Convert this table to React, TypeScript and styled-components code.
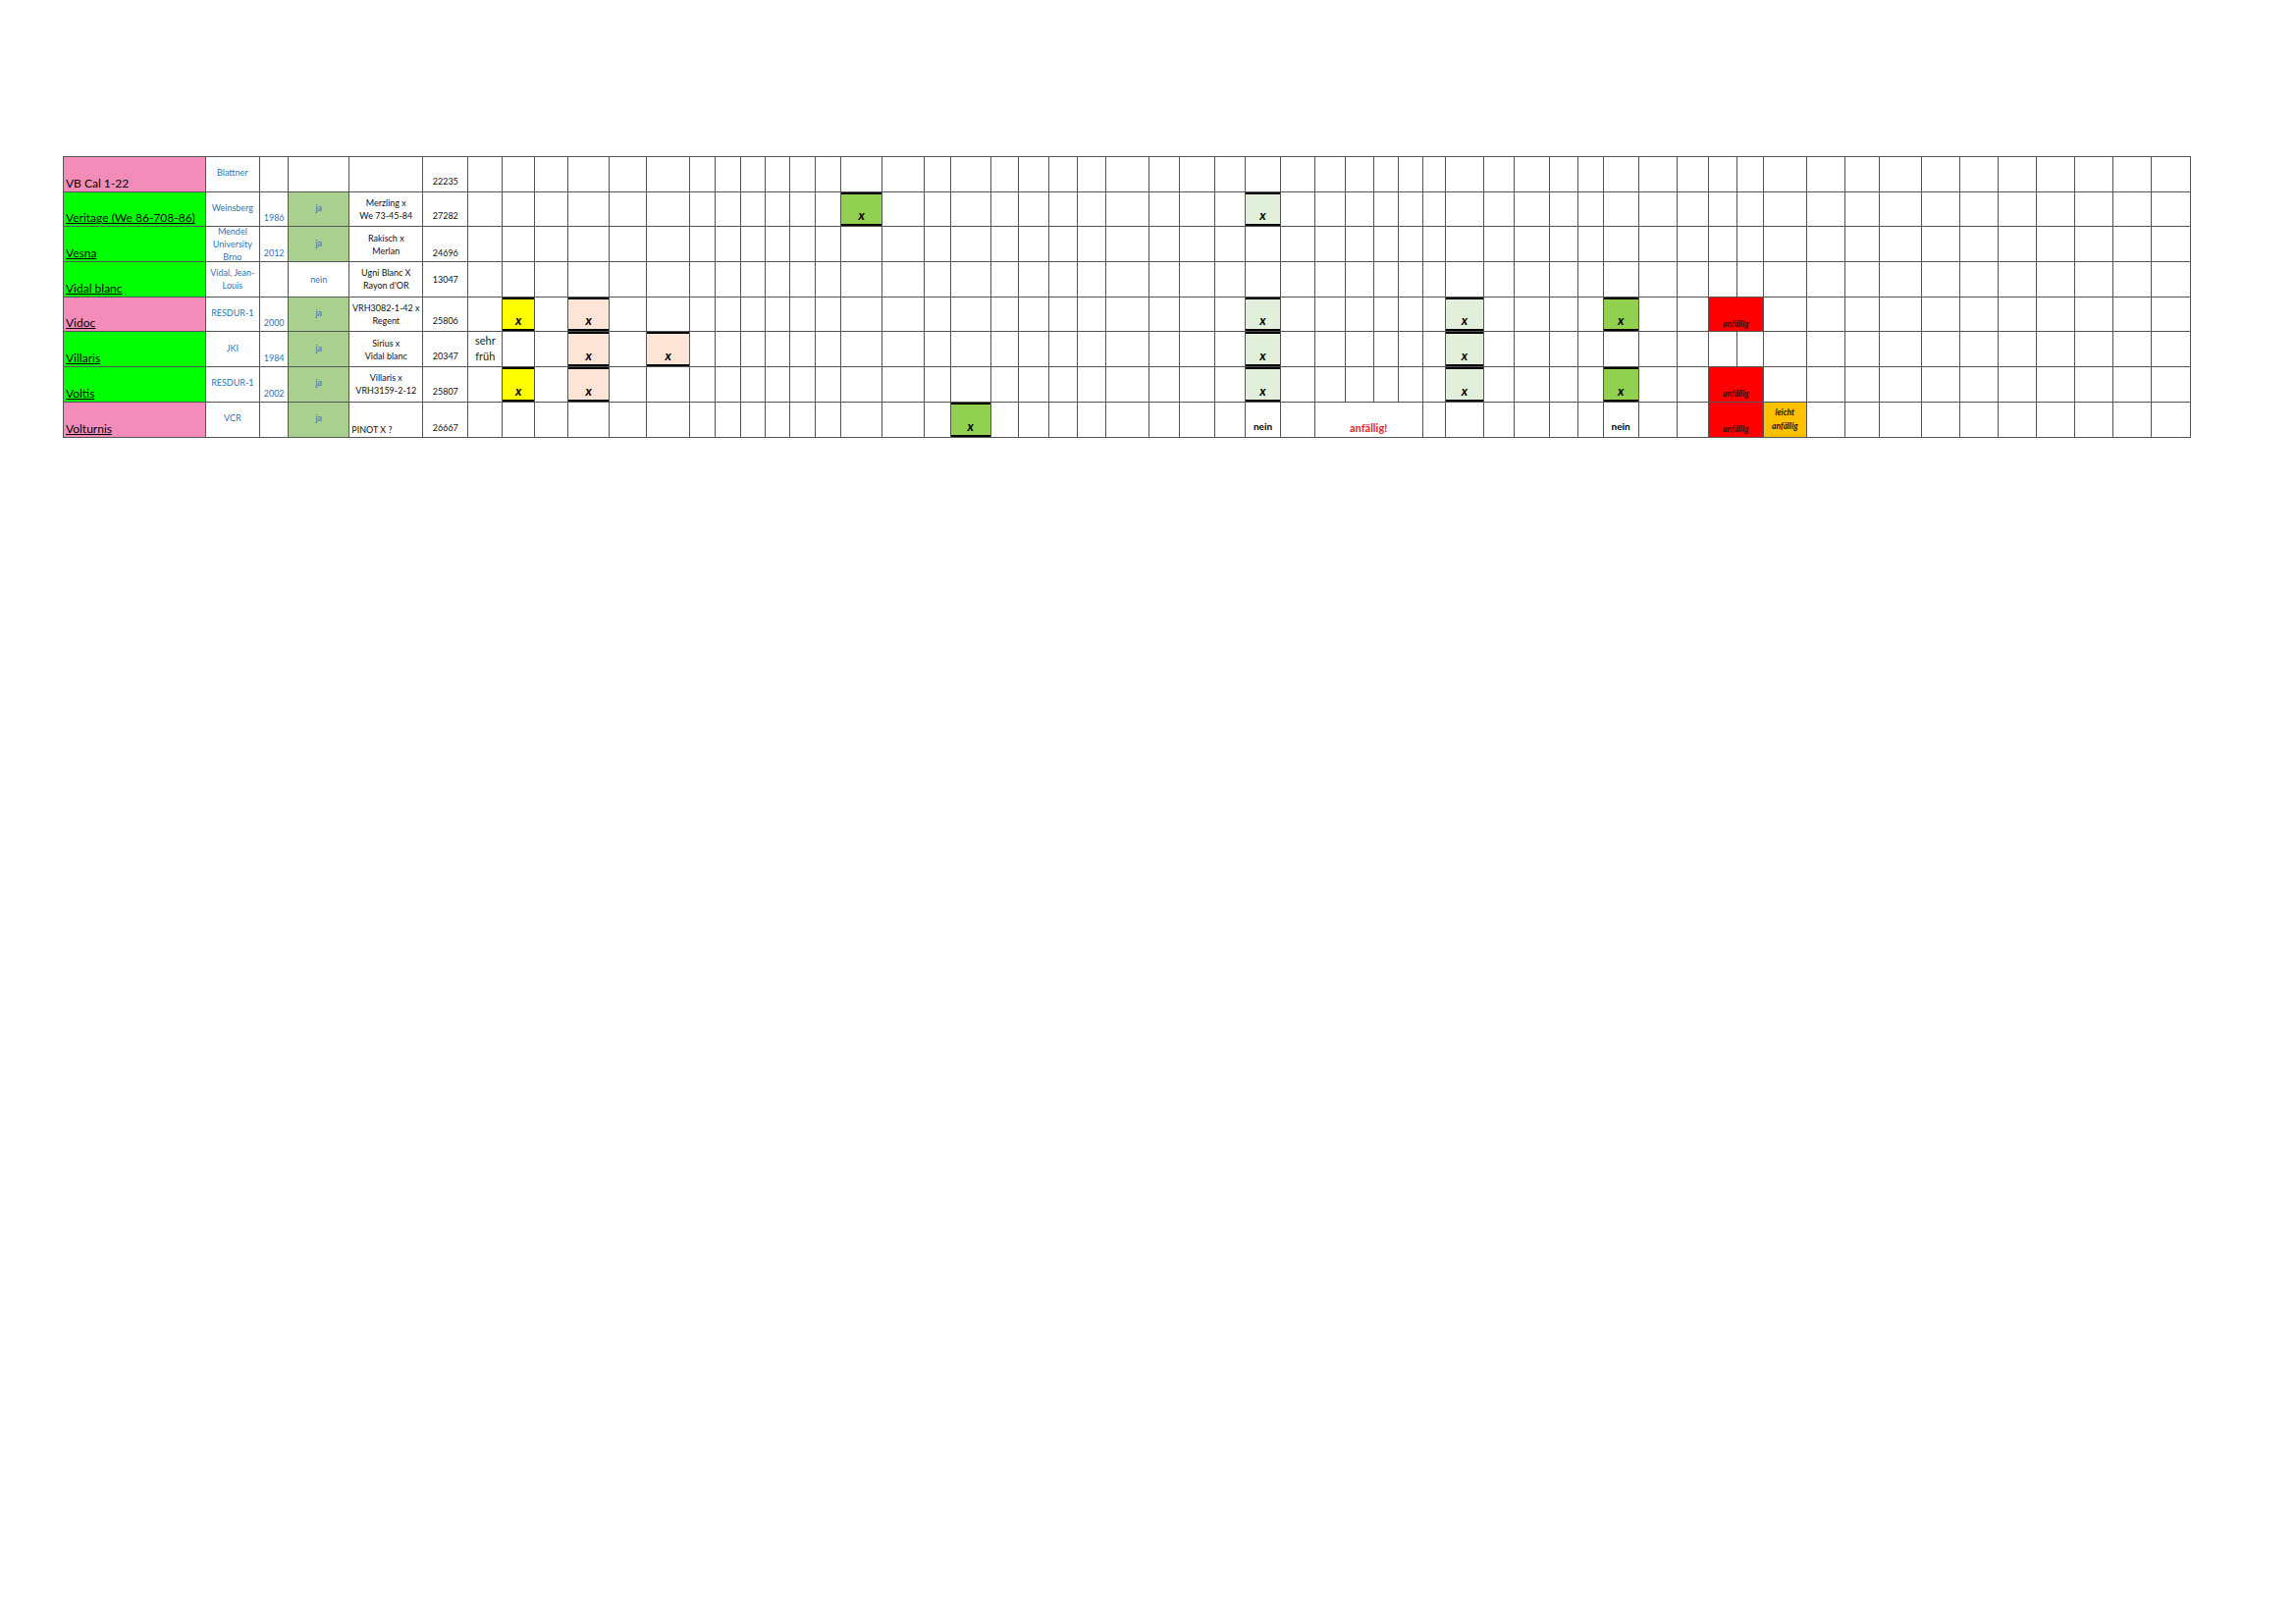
import * as React from 'react';
import styled, { createGlobalStyle } from 'styled-components';

// column edges measured on the sheet, in page pixels
const EDGES = [
  64, 208.7, 264, 293.3, 355.3, 430.3, 476.3, 511.3, 544, 578.3, 620.3, 658.3, 702.3, 728.3,
  753.7, 779, 803.7, 830, 856, 898.3, 940.7, 967.7, 1009, 1036.7, 1067.7, 1096.7, 1125.7,
  1170.3, 1201, 1237.3, 1268, 1304.3, 1338.8, 1370.3, 1399.3, 1424.3, 1448.7, 1472.3, 1511,
  1542, 1578.3, 1607, 1633, 1668.7, 1708, 1740, 1769.2, 1796, 1840, 1879, 1914.7, 1957.7,
  1996.7, 2035.7, 2074.7, 2113.7, 2152.7, 2191.7, 2231,
];
const WIDTHS = EDGES.slice(1).map((e, i) => e - EDGES[i]);
const TOTAL = EDGES[EDGES.length - 1] - EDGES[0];

const PINK = '#f38cb9';
const LIME = '#00ff00';
const JA = '#a9d08e';
const YELLOW = '#ffff00';
const PEACH = '#fce4d6';
const GREEN = '#92d050';
const PALE = '#e2efda';
const RED = '#ff0000';
const ORANGE = '#ffc000';

type V = 'center' | 'bottom';
type Kind = 'name' | 'plainName' | 'blue' | 'plain' | 'mark' | 'nein' | 'alarm' | 'note' | 'early';

interface CellSpec {
  kind: Kind;
  text?: React.ReactNode;
  bg?: string;
  v?: V;
  pb?: number;
  align?: 'left' | 'center';
  span?: number;
  thick?: boolean;
}

interface RowSpec {
  cells: Record<number, CellSpec>;
}

const name = (text: string, bg: string, underline = true): CellSpec => ({
  kind: underline ? 'name' : 'plainName',
  text,
  bg,
  v: 'bottom',
  pb: 1,
  align: 'left',
});
const blue = (text: React.ReactNode, v: V = 'center', pb = 0): CellSpec => ({ kind: 'blue', text, v, pb });
const ja = (): CellSpec => ({ kind: 'blue', text: 'ja', bg: JA, v: 'center', pb: 3 });
const plain = (text: React.ReactNode, v: V = 'center', pb = 0): CellSpec => ({ kind: 'plain', text, v, pb });
const mark = (bg: string): CellSpec => ({ kind: 'mark', text: 'x', bg, v: 'bottom', pb: 3, thick: true });
const nein = (): CellSpec => ({ kind: 'nein', text: 'nein', v: 'bottom', pb: 4 });
const redNote = (): CellSpec => ({ kind: 'note', text: 'anfällig', bg: RED, v: 'bottom', pb: 1, span: 2 });

const ROWS: RowSpec[] = [
  {
    cells: {
      0: name('VB Cal 1-22', PINK, false),
      1: blue('Blattner', 'center', 4),
      5: plain('22235', 'bottom', 4),
    },
  },
  {
    cells: {
      0: name('Veritage (We 86-708-86)', LIME),
      1: blue('Weinsberg', 'center', 3),
      2: blue('1986', 'bottom', 2),
      3: ja(),
      4: plain(<>Merzling x<br />We 73-45-84</>),
      5: plain('27282', 'bottom', 4),
      18: mark(GREEN),
      30: mark(PALE),
    },
  },
  {
    cells: {
      0: name('Vesna', LIME),
      1: blue(<>Mendel<br />University<br />Brno</>),
      2: blue('2012', 'bottom', 2),
      3: ja(),
      4: plain(<>Rakisch x<br />Merlan</>),
      5: plain('24696', 'bottom', 2),
    },
  },
  {
    cells: {
      0: name('Vidal blanc', LIME),
      1: blue(<>Vidal, Jean-<br />Louis</>),
      3: blue('nein'),
      4: plain(<>Ugni Blanc X<br />Rayon d'OR</>),
      5: plain('13047'),
    },
  },
  {
    cells: {
      0: name('Vidoc', PINK),
      1: blue('RESDUR-1', 'center', 3),
      2: blue('2000', 'bottom', 2),
      3: ja(),
      4: plain(<>VRH3082-1-42 x<br />Regent</>),
      5: plain('25806', 'bottom', 4),
      7: mark(YELLOW),
      9: mark(PEACH),
      30: mark(PALE),
      37: mark(PALE),
      42: mark(GREEN),
      45: redNote(),
    },
  },
  {
    cells: {
      0: name('Villaris', LIME),
      1: blue('JKI', 'center', 3),
      2: blue('1984', 'bottom', 2),
      3: ja(),
      4: plain(<>Sirius x<br />Vidal blanc</>),
      5: plain('20347', 'bottom', 4),
      6: { kind: 'early', text: <>sehr<br />früh</>, v: 'center', pb: 2 },
      9: mark(PEACH),
      11: mark(PEACH),
      30: mark(PALE),
      37: mark(PALE),
    },
  },
  {
    cells: {
      0: name('Voltis', LIME),
      1: blue('RESDUR-1', 'center', 3),
      2: blue('2002', 'bottom', 2),
      3: ja(),
      4: plain(<>Villaris x<br />VRH3159-2-12</>),
      5: plain('25807', 'bottom', 4),
      7: mark(YELLOW),
      9: mark(PEACH),
      30: mark(PALE),
      37: mark(PALE),
      42: mark(GREEN),
      45: redNote(),
    },
  },
  {
    cells: {
      0: name('Volturnis', PINK),
      1: blue('VCR', 'center', 4),
      3: ja(),
      4: { kind: 'plain', text: 'PINOT X ?', v: 'bottom', pb: 1, align: 'left' },
      5: plain('26667', 'bottom', 3),
      21: mark(GREEN),
      30: nein(),
      32: { kind: 'alarm', text: 'anfällig!', v: 'bottom', pb: 2, span: 4 },
      42: nein(),
      45: redNote(),
      47: { kind: 'note', text: <>leicht<br />anfällig</>, bg: ORANGE, v: 'center', pb: 1 },
    },
  },
];

const GlobalStyle = createGlobalStyle`
  body {
    margin: 0;
    background: #ffffff;
    font-family: Lato, "Liberation Sans", sans-serif;
  }
`;

const Page = styled.div`
  padding: 159px 0 0 64px;
  min-height: 1654px;
  box-sizing: border-box;
`;

const Sheet = styled.table`
  border-collapse: collapse;
  table-layout: fixed;
  width: ${TOTAL}px;
`;

const Row = styled.tr`
  height: 35.7px;
`;

const Cell = styled.td<{ $bg?: string; $thick?: boolean }>`
  border: 1px solid #555;
  padding: 0;
  vertical-align: top;
  background: ${(p) => p.$bg ?? '#ffffff'};
  box-shadow: ${(p) => (p.$thick ? 'inset 0 2px 0 #000, inset 0 -2px 0 #000' : 'none')};
`;

const Box = styled.div<{ $v: V; $pb: number; $align: 'left' | 'center' }>`
  height: 34.7px;
  box-sizing: border-box;
  overflow: hidden;
  display: flex;
  flex-direction: column;
  justify-content: ${(p) => (p.$v === 'bottom' ? 'flex-end' : 'center')};
  text-align: ${(p) => p.$align};
  padding: 0 2px ${(p) => p.$pb}px;
  font-size: 9px;
  line-height: 13px;
  color: #111;
  white-space: nowrap;
`;

const NameText = styled.span<{ $underline: boolean }>`
  font-size: 12px;
  line-height: 15px;
  color: #000;
  text-decoration: ${(p) => (p.$underline ? 'underline' : 'none')};
  text-underline-offset: 1px;
`;

const BlueText = styled.span`
  color: #2f75b5;
`;

const MarkText = styled.span`
  font-size: 13px;
  font-weight: 700;
  font-style: italic;
  color: #000;
`;

const NeinText = styled.span`
  font-size: 10px;
  font-weight: 700;
  color: #000;
`;

const AlarmText = styled.span`
  font-size: 11px;
  font-weight: 700;
  color: #e5232d;
`;

const NoteText = styled.span`
  font-size: 8.5px;
  line-height: 12.4px;
  font-weight: 700;
  font-style: italic;
  color: #3a0a0a;
`;

const EarlyText = styled.span`
  font-size: 11px;
  line-height: 15.5px;
  color: #222;
`;

function Content({ spec }: { spec: CellSpec }) {
  switch (spec.kind) {
    case 'name':
    case 'plainName':
      return <NameText $underline={spec.kind === 'name'}>{spec.text}</NameText>;
    case 'blue':
      return <BlueText>{spec.text}</BlueText>;
    case 'mark':
      return <MarkText>{spec.text}</MarkText>;
    case 'nein':
      return <NeinText>{spec.text}</NeinText>;
    case 'alarm':
      return <AlarmText>{spec.text}</AlarmText>;
    case 'note':
      return <NoteText>{spec.text}</NoteText>;
    case 'early':
      return <EarlyText>{spec.text}</EarlyText>;
    default:
      return <span>{spec.text}</span>;
  }
}

function SheetRow({ row }: { row: RowSpec }) {
  const out: React.ReactNode[] = [];
  for (let c = 0; c < WIDTHS.length; c++) {
    const spec = row.cells[c];
    if (!spec) {
      out.push(<Cell key={c} />);
      continue;
    }
    const span = spec.span ?? 1;
    out.push(
      <Cell key={c} colSpan={span} $bg={spec.bg} $thick={spec.thick}>
        <Box $v={spec.v ?? 'center'} $pb={spec.pb ?? 0} $align={spec.align ?? 'center'}>
          <div>
            <Content spec={spec} />
          </div>
        </Box>
      </Cell>
    );
    c += span - 1;
  }
  return <Row>{out}</Row>;
}

export default function App() {
  return (
    <Page>
      <GlobalStyle />
      <Sheet>
        <colgroup>
          {WIDTHS.map((w, i) => (
            <col key={i} style={{ width: w }} />
          ))}
        </colgroup>
        <tbody>
          {ROWS.map((row, i) => (
            <SheetRow key={i} row={row} />
          ))}
        </tbody>
      </Sheet>
    </Page>
  );
}
